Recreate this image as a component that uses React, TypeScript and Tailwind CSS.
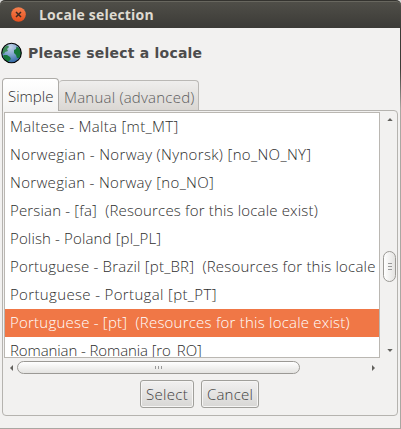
const rows = [
  { text: "Maltese - Malta [mt_MT]", track: "tracking-[0.31px]" },
  { text: "Norwegian - Norway (Nynorsk) [no_NO_NY]", track: "tracking-[0.34px]" },
  { text: "Norwegian - Norway [no_NO]", track: "tracking-[0.32px]" },
  { text: "Persian - [fa]  (Resources for this locale exist)", track: "tracking-[0.17px]" },
  { text: "Polish - Poland [pl_PL]", track: "tracking-[0.14px]" },
  { text: "Portuguese - Brazil [pt_BR]  (Resources for this locale", track: "tracking-[0.2px]" },
  { text: "Portuguese - Portugal [pt_PT]", track: "tracking-[0.35px]" },
  { text: "Portuguese - [pt]  (Resources for this locale exist)", track: "tracking-[0.22px]", selected: true },
  { text: "Romanian - Romania [ro_RO]", track: "tracking-[-0.1px]" },
];

function Globe() {
  return (
    <svg width="22" height="22" viewBox="0 0 22 22" className="shrink-0">
      <defs>
        <radialGradient id="sea" cx="0.45" cy="0.2" r="0.85">
          <stop offset="0" stopColor="#c3d4e8" />
          <stop offset="0.5" stopColor="#7a9fcb" />
          <stop offset="1" stopColor="#235c9c" />
        </radialGradient>
      </defs>
      <circle cx="11.5" cy="11" r="9.8" fill="url(#sea)" />
      <path d="M2.5 8 5 4.500l3-1 1 1.500-2 2 1 2-3 1-1 2-2-1z" fill="#3b8a55" />
      <path d="m4 13 3 0 3 2 1 2-2 2-1 1-3-2-2-4z" fill="#16773a" />
      <path d="m16.500 4.500 2.500 1.500 2 4 0 3-2 3-2 0-1-3-2-2 0-3 2-1z" fill="#16773a" />
      <circle cx="11.500" cy="11" r="9.800" fill="none" stroke="#000" strokeWidth="1.1" />
    </svg>
  );
}

function Arrow({ className, points }: { className: string; points: string }) {
  return (
    <svg width="6" height="6" viewBox="0 0 6 6" className={className}>
      <polygon points={points} fill="#62615d" />
    </svg>
  );
}

function Button({ label, width, track }: { label: string; width: string; track: string }) {
  return (
    <button
      className={`h-7 ${width} rounded-[3px] border border-[#a09f9b] bg-linear-to-b from-[#f1f0f0] to-[#d8d7d5] text-center text-[15px] leading-[25px] whitespace-nowrap ${track} text-[#3f3f3f] shadow-[inset_0_0_0_1px_#f6f5f4]`}
    >
      {label}
    </button>
  );
}

export default function App() {
  return (
    <div className="flex h-[429px] w-[401px] flex-col overflow-hidden bg-[#d8d8d6] font-['Open_Sans',sans-serif] font-light text-[#2e2e2e]">
      <header className="flex h-7 shrink-0 items-center rounded-t-[5px] border-t border-[#34332f] bg-linear-to-b from-[#504f49] to-[#3c3b37] pl-[11px] shadow-[inset_0_1px_0_#68675f]">
        <svg width="15" height="15" viewBox="0 0 15 15" className="shrink-0">
          <defs>
            <linearGradient id="close" x1="0" y1="0" x2="0" y2="1">
              <stop offset="0" stopColor="#f5814f" />
              <stop offset="1" stopColor="#e64f1e" />
            </linearGradient>
          </defs>
          <circle cx="7.5" cy="7.5" r="7.3" fill="url(#close)" />
          <path d="m5 5 5 5m0-5-5 5" stroke="#3c2a22" strokeWidth="1.5" />
        </svg>
        <h1 className="ml-[13px] text-[14px] leading-[26px] font-bold tracking-[0.2px] whitespace-nowrap text-[#dfdbd2]">
          Locale selection
        </h1>
      </header>

      <div className="flex flex-1">
        <main className="flex w-[400px] flex-col border-b border-[#aaa7a2] bg-[#f2f1f0] pt-[14px]">
          <div className="flex h-[22px] items-center gap-[6px]">
            <Globe />
            <h2 className="font-['DejaVu_Sans',sans-serif] text-[14px] leading-[22px] font-bold tracking-[0.22px] whitespace-nowrap text-[#4c4c4c]">
              Please select a locale
            </h2>
          </div>

          <div className="mt-[14px] flex h-8 items-end pl-[2px]">
            <div className="relative -mb-px h-[33px] w-[57px] rounded-t-[4px] border border-b-0 border-[#aeaca8] bg-linear-to-b from-white to-[#f4f4f3] pl-[5px] text-[15px] leading-[35px] whitespace-nowrap">
              Simple
            </div>
            <div className="h-[30px] w-[140px] rounded-t-[4px] border border-b-0 border-l-0 border-[#bab8b5] bg-linear-to-b from-[#efeeed] to-[#dad7d3] pl-[5px] text-[15px] leading-[33px] tracking-[0.22px] whitespace-nowrap text-[#5c5c5c]">
              Manual (advanced)
            </div>
          </div>

          <section className="ml-[2px] h-[306px] w-[396px] rounded-b-[4px] rounded-tr-[4px] border border-[#b5b3af] pt-px pl-px">
            <div className="flex">
              <ul className="h-[246px] w-[376px] overflow-hidden border border-[#bab7b2] bg-white text-[15px]">
                {rows.map((row) => (
                  <li
                    key={row.text}
                    className={`h-7 pl-[5px] leading-[26px] whitespace-pre ${row.track} ${row.selected ? "bg-[#f07746] text-white" : ""}`}
                  >
                    {row.text}
                  </li>
                ))}
              </ul>
              <div className="flex h-[246px] w-[17px] flex-col items-center pl-[2px]">
                <Arrow className="mt-[5px]" points="0.3,4 3,1 5.7,4" />
                <div className="mt-[128px] flex h-[31px] w-[13px] flex-col items-center justify-center gap-[2px] rounded-full border border-[#9b9995] bg-linear-to-r from-white to-[#e4e3e1]">
                  <i className="h-px w-[4px] bg-[#999]" />
                  <i className="h-px w-[4px] bg-[#999]" />
                  <i className="h-px w-[4px] bg-[#999]" />
                </div>
                <Arrow className="mt-[65px]" points="0.3,2 3,5 5.7,2" />
              </div>
            </div>
            <div className="flex h-[19px] items-center pl-[4px]">
              <Arrow className="" points="5,0 2,3 5,6" />
              <div className="ml-[3px] flex h-[13px] w-[283px] items-center justify-center gap-[2px] rounded-full border border-[#9b9995] bg-linear-to-b from-white to-[#e4e3e1]">
                <i className="h-[3px] w-px bg-[#999]" />
                <i className="h-[3px] w-px bg-[#999]" />
                <i className="h-[3px] w-px bg-[#999]" />
              </div>
              <Arrow className="ml-[71px]" points="1,0 4,3 1,6" />
            </div>
            <div className="flex gap-[7px] pt-[3px] pl-[136px]">
              <Button label="Select" width="w-[54px]" track="tracking-[0.3px]" />
              <Button label="Cancel" width="w-[58px]" track="tracking-[0.2px]" />
            </div>
          </section>
        </main>
        <div className="w-px bg-linear-to-b from-[#3c3b37] from-10% to-[#aaa7a2] to-20%" />
      </div>
    </div>
  );
}
